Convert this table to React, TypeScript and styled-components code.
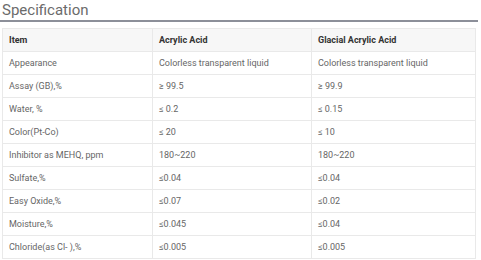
import React from "react";
import styled, { createGlobalStyle } from "styled-components";

const GlobalStyle = createGlobalStyle`
  html, body {
    margin: 0;
    padding: 0;
    background: #ffffff;
  }
  body {
    font-family: Roboto, "Liberation Sans", Arial, sans-serif;
  }
`;

const rows: [string, string, string][] = [
  ["Appearance", "Colorless transparent liquid", "Colorless transparent liquid"],
  ["Assay (GB),%", "≥ 99.5", "≥ 99.9"],
  ["Water, %", "≤ 0.2", "≤ 0.15"],
  ["Color(Pt-Co)", "≤ 20", "≤ 10"],
  ["Inhibitor as MEHQ, ppm", "180~220", "180~220"],
  ["Sulfate,%", "≤0.04", "≤0.04"],
  ["Easy Oxide,%", "≤0.07", "≤0.02"],
  ["Moisture,%", "≤0.045", "≤0.04"],
  ["Chloride(as Cl- ),%", "≤0.005", "≤0.005"],
];

const App = () => {
  return (
    <>
      <GlobalStyle />
      <Section className="Spec">
        <h2 className="title">Specification</h2>
        <table className="SpecTable">
          <thead>
            <tr>
              <th>Item</th>
              <th>Acrylic Acid</th>
              <th>Glacial Acrylic Acid</th>
            </tr>
          </thead>
          <tbody>
            {rows.map((r) => (
              <tr key={r[0]}>
                <td>{r[0]}</td>
                <td>{r[1]}</td>
                <td>{r[2]}</td>
              </tr>
            ))}
          </tbody>
        </table>
      </Section>
    </>
  );
};

const Section = styled.section`
  width: 476px;
  padding: 0 0 0 2px;
  box-sizing: content-box;
  .title {
    margin: 0 0 0 -2px;
    padding: 0 0 0 2px;
    height: 20px;
    font-size: 15px;
    line-height: 21px;
    font-weight: 400;
    color: #6b6b6b;
    border-bottom: 2px solid #8c8f99;
    box-sizing: content-box;
  }
  .SpecTable {
    margin-top: 6px;
    width: 474px;
    border-collapse: collapse;
    table-layout: fixed;
    font-size: 9px;
    color: #666;
    border: 1px solid #e6e6e6;
    th,
    td {
      height: 23px;
      padding: 0 0 0 6px;
      text-align: left;
      vertical-align: middle;
      border: 1px solid #e9e9e9;
      box-sizing: border-box;
      white-space: nowrap;
    }
    th {
      font-weight: 700;
      color: #333;
      background: #f7f7f7;
    }
    th:nth-child(1) { width: 150px; }
    th:nth-child(2) { width: 159px; }
  }
`;

export default App;
